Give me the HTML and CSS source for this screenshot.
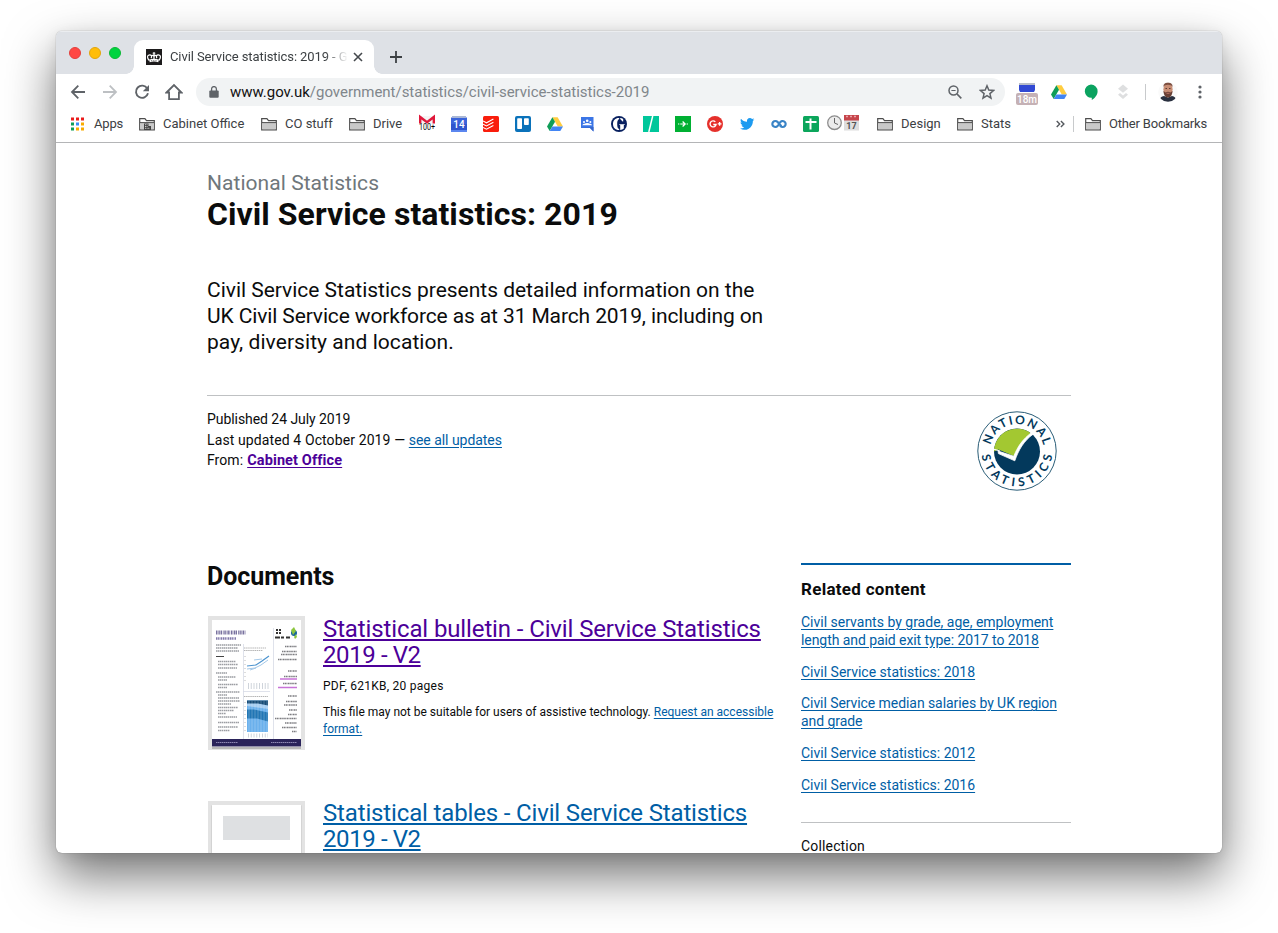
FILE: index.html
```html
<!DOCTYPE html>
<html lang="en">
<head>
<meta charset="utf-8">
<title>Civil Service statistics: 2019</title>
<link rel="stylesheet" href="styles.css">
</head>
<body>
<svg width="0" height="0" class="defs" aria-hidden="true">
  <symbol id="folder" viewBox="0 0 16 16"><path d="M.7 13.8V2.600h5.200l1.600 2h7.800v9.200z" fill="#fff" stroke="#4d4d4d" stroke-width="1.200"/><path d="M1.300 7h13.400v6.200H1.300z" fill="#c9c9c9"/><path d="M1 6.600h14" stroke="#4d4d4d"/></symbol>
  <symbol id="drive" viewBox="0 0 16 16"><path d="M5.400 1.200h5.200L16 10.400h-5.200z" fill="#ffcd40"/><path d="M5.400 1.200 8 5.700 2.700 15 0 10.400z" fill="#0f9d58"/><path d="M5.400 10.400H16L13.300 15H2.700z" fill="#4285f4"/></symbol>
</svg>
<div class="window">
  <div class="tabstrip">
    <div class="lights"><i class="red"></i><i class="amber"></i><i class="green"></i></div>
    <div class="tab">
      <svg width="16" height="16" viewBox="0 0 16 16"><path d="M0 0h16v16H0z" fill="#1d1b1c"/><g fill="none" stroke="#fff"><path d="M8 5v5M3.300 11.500C.8 9 .9 6 3.600 5.800c2-.1 2.300 1.600 1.600 3.400M12.700 11.500c2.500-2.500 2.400-5.500-.3-5.700-2-.1-2.300 1.600-1.600 3.400M5.200 7.500c1.200-1.800 2.400-1.300 2.800.2.400-1.500 1.600-2 2.800-.2" stroke-width="1.200"/><path d="M6.700 4.200h2.600M8 3v2.400" stroke-width="1"/></g><path d="M3.200 10.600c3.100-1 6.500-1 9.600 0l-.5 2.600c-2.900-.8-5.700-.8-8.600 0z" fill="#fff"/><path d="M5 11.700h6" stroke="#1d1b1c" stroke-width=".6" stroke-dasharray="1.200 1"/></svg>
      <span class="tab-title">Civil Service statistics: 2019 - G</span>
      <svg class="x" width="10" height="10" viewBox="0 0 10 10"><path d="m1 1 8 8M9 1 1 9" stroke="#45494d" stroke-width="1.600"/></svg>
    </div>
    <svg class="plus" width="14" height="14" viewBox="0 0 14 14"><path d="M7 1v12M1 7h12" stroke="#3c4043" stroke-width="1.800"/></svg>
  </div>

  <div class="toolbar">
    <div class="nav">
      <svg width="16" height="16" viewBox="0 0 16 16"><path d="M15 8H2.500M8.300 1.700 2 8l6.300 6.300" fill="none" stroke="#5f6368" stroke-width="1.800"/></svg>
      <svg width="16" height="16" viewBox="0 0 16 16"><path d="M1 8h12.500M7.700 1.700 14 8l-6.300 6.300" fill="none" stroke="#bdc0c3" stroke-width="1.800"/></svg>
      <svg width="16" height="16" viewBox="0 0 16 16"><path d="M13.300 4.500A6.100 6.100 0 1 0 14 9.300" fill="none" stroke="#5f6368" stroke-width="1.900"/><path d="M15 1v6.300H8.800z" fill="#5f6368"/></svg>
      <svg width="18" height="18" viewBox="0 0 18 18"><path d="M1.500 9.500 9 2l7.500 7.500h-2.600v6.600H4.100V9.500z" fill="none" stroke="#5f6368" stroke-width="1.800"/></svg>
    </div>
    <div class="omnibox">
      <svg width="10" height="12" viewBox="0 0 10 12"><rect x=".3" y="4.500" width="9.400" height="7.200" rx="1" fill="#5f6368"/><path d="M2.600 5V3a2.400 2.400 0 0 1 4.800 0v2" fill="none" stroke="#5f6368" stroke-width="1.300"/></svg>
      <span class="url"><b>www.gov.uk</b>/government/statistics/civil-service-statistics-2019</span>
      <svg class="mag" width="14" height="14" viewBox="0 0 14 14"><circle cx="5.500" cy="5.500" r="4.500" fill="none" stroke="#5f6368" stroke-width="1.500"/><path d="m9 9 4.300 4.300" stroke="#5f6368" stroke-width="1.700"/><path d="M3.400 5.500h4.200" stroke="#5f6368"/></svg>
      <svg width="16" height="16" viewBox="0 0 16 16"><path d="m8 1.800 1.800 4.300 4.700.4-3.600 3.100 1.100 4.600L8 11.700l-4 2.500 1.100-4.600L1.500 6.500l4.700-.4z" fill="none" stroke="#5f6368" stroke-width="1.500"/></svg>
    </div>
    <div class="exts">
      <span class="ext meet"><svg width="16" height="10" viewBox="0 0 16 10"><path d="M0 0h16v2H0z" fill="#b8bdc8"/><path d="M0 2h16v5l-1 2H1L0 7z" fill="#3149d3"/></svg><em>18m</em></span>
      <span class="ext"><svg width="16" height="16"><use href="#drive"/></svg></span>
      <span class="ext"><svg width="14" height="17" viewBox="0 0 14 17"><path d="M7 .6a6.600 6.600 0 0 1 6.600 6.600c0 3.800-2.800 6.800-5.800 8.900v-2.300A6.600 6.600 0 1 1 7 .6z" fill="#0ba360"/></svg></span>
      <span class="ext"><svg width="12" height="16" viewBox="0 0 12 16"><path d="m6 .5 5 4.200-5 4.100-5-4.100zM1 10.700l2-1.600 3 2.500 3-2.500 2 1.600-5 4.200z" fill="#dedfe0"/></svg></span>
      <i class="bar"></i>
      <svg class="avatar" width="20" height="20" viewBox="0 0 20 20"><clipPath id="av"><circle cx="10" cy="10" r="9.800"/></clipPath><g clip-path="url(#av)"><path d="M0 0h20v20H0z" fill="#fafafa"/><path d="M1 20c.5-4 2.500-5.700 5-6l4 1.500 4-1.500c2.500.3 4 2 5 6z" fill="#29303f"/><ellipse cx="10" cy="7.300" rx="4.600" ry="6" fill="#c88d74"/><path d="M5.400 5C5.200 2 7 .5 10 .5s4.800 1.500 4.600 4.500C13 2 7 2 5.400 5z" fill="#7d4f40"/><path d="M5.400 9c.5 4.800 2.300 6.500 4.600 6.500s4.100-1.700 4.600-6.500l-2.200 1.400c-1.500-.8-3.300-.8-4.800 0z" fill="#6a4035"/><path d="M7.500 6.500h1.500m2 0h1.500" stroke="#5e3a30"/><path d="M8.500 11.300h3" stroke="#b87164"/></g></svg>
      <svg class="dots" width="4" height="14" viewBox="0 0 4 14" fill="#5f6368"><circle cx="2" cy="2" r="1.600"/><circle cx="2" cy="7" r="1.600"/><circle cx="2" cy="12" r="1.600"/></svg>
    </div>
  </div>

  <div class="bookmarks">
    <span class="bm"><svg width="16" height="16" viewBox="0 0 16 16"><path d="M1 1.500h3v3H1zM6 1.500h3v3H6zM11 1.500h3v3h-3z" fill="#ea1b1b"/><path d="M1 6.500h3v3H1z" fill="#0f9d58"/><path d="M6 6.500h3v3H6z" fill="#3b8bf5"/><path d="M11 6.500h3v3h-3z" fill="#f9ab00"/><path d="M1 11.500h3v3H1z" fill="#0f9d58"/><path d="M6 11.500h3v3H6zM11 11.500h3v3h-3z" fill="#f9ab00"/></svg><span class="w29">Apps</span></span>
    <span class="bm"><svg width="16" height="16" viewBox="0 0 16 16"><use href="#folder"/><path d="M5 7.500h4.500V10H12v4H5z" fill="#444"/><path d="M6 8.700h2.500M6 10.500h2.500M6 12.300h5" stroke="#eee" stroke-width=".8" stroke-dasharray="1 .6"/></svg><span class="w82">Cabinet Office</span></span>
    <span class="bm"><svg width="16" height="16"><use href="#folder"/></svg><span class="w48">CO stuff</span></span>
    <span class="bm"><svg width="16" height="16"><use href="#folder"/></svg><span class="w30">Drive</span></span>
    <svg class="gmail" width="16" height="16" viewBox="0 0 16 16"><path d="M0 0h16v8H0z" fill="#f5f5f5"/><path d="M1.200 7.500V1L8 6.200 14.800 1v6.500" fill="none" stroke="#e0173a" stroke-width="2.400"/><text x="0" y="14" class="g100" textLength="16" lengthAdjust="spacingAndGlyphs">100+</text></svg>
    <svg width="16" height="16" viewBox="0 0 16 16"><path d="M0 1.500h16V15q0 1-1 1H1q-1 0-1-1z" fill="#3b64da"/><path d="M0 8h16v6H0z" fill="#2f55cd"/><path d="M1 0h14v2H1z" fill="#a9b7d6"/><path d="M0 14h16v2H0z" fill="#5b86ef"/><text x="8" y="12.300" class="cal14">14</text></svg>
    <svg width="16" height="16" viewBox="0 0 16 16"><rect width="16" height="16" rx="1.500" fill="#f91d0c"/><path d="m0 5 3.500 1.800L10.400 3M0 8.200 3.500 10l6.900-3.800M0 11.400l3.500 1.800L10.400 9.400" fill="none" stroke="#fff" stroke-width="1.100"/></svg>
    <svg width="16" height="16" viewBox="0 0 16 16"><rect width="16" height="16" rx="2" fill="#0a72ba"/><rect x="2.200" y="2.200" width="4.800" height="10.800" rx=".8" fill="#fff"/><rect x="9" y="2.200" width="4.800" height="6.800" rx=".8" fill="#fff"/></svg>
    <svg width="16" height="16"><use href="#drive"/></svg>
    <svg width="16" height="16" viewBox="0 0 16 16"><path d="M2 1h12.500v14.500L11 12H2z" fill="#3a75e6"/><path d="M2 12h9l3.500 3.500V11z" fill="#3565c9"/><g fill="#fff"><circle cx="8.200" cy="4.800" r="1.300"/><circle cx="5" cy="6" r="1"/><circle cx="11.400" cy="6" r="1"/><path d="M3.300 9.300q.6-2 2.200-1.500 1-.8 2.700-.8t2.700.8q1.600-.5 2.200 1.500z"/></g></svg>
    <svg width="16" height="16" viewBox="0 0 16 16"><circle cx="8" cy="8" r="8" fill="#08205f"/><path d="M8.200 2C4.500 1.800 2 4.200 2 8s2.500 6.200 6.200 6v-.9C6.700 12.500 6.200 11 6.200 8s.5-4.500 2-5.100zM9.200 2c1.200.1 2.200.5 3 1.100v2.500h-.6L9.200 3zM8.200 8.200h5.600v.6l-1 .5v3.300c-.9.800-2.200 1.300-3.600 1.400V9.300l-1-.5z" fill="#fff"/></svg>
    <svg width="16" height="16" viewBox="0 0 16 16"><path d="M0 0h16v16H0z" fill="#00c79b"/><path d="M9.700 0 5.800 16" stroke="#fff" stroke-width="1.500"/></svg>
    <svg width="16" height="16" viewBox="0 0 16 16"><path d="M0 0h16v16H0z" fill="#00b033"/><path d="M3 8h1.300M5.300 8h4.300M7.600 5.500 10.200 8l-2.600 2.500M11.600 8H13" fill="none" stroke="#fff" stroke-width="1.200"/></svg>
    <svg width="16" height="16" viewBox="0 0 16 16"><circle cx="8" cy="8" r="8" fill="#e5302b"/><path d="M8.300 5.900A3 3 0 1 0 9 8.500H6.300M10.700 7.900h3.800M12.600 6v3.800" fill="none" stroke="#fff" stroke-width="1.400"/></svg>
    <svg width="16" height="16" viewBox="0 0 24 24"><path d="M23 5.200c-.8.400-1.600.6-2.500.7.900-.5 1.600-1.400 1.900-2.400-.8.500-1.800.9-2.800 1.100A4.400 4.400 0 0 0 12 8.600C8.400 8.400 5.100 6.700 3 4c-1.200 2-.6 4.600 1.300 5.900-.7 0-1.400-.2-2-.5 0 2 1.400 3.900 3.500 4.300-.6.200-1.300.2-2 .1.600 1.700 2.200 3 4.100 3A9 9 0 0 1 1.500 18.600 12.500 12.500 0 0 0 20.800 7.500c.9-.6 1.600-1.400 2.200-2.300z" fill="#1d9bf0"/></svg>
    <svg width="16" height="16" viewBox="0 0 16 16"><path d="M9 6.600a3 3 0 1 1 .4 3.400M7 9.400A3 3 0 1 1 6.600 6L10 9.700" fill="none" stroke="#3a84c6" stroke-width="2.200" stroke-linecap="round"/></svg>
    <svg width="16" height="16" viewBox="0 0 16 16"><rect width="16" height="16" rx="1.500" fill="#0ca65c"/><path d="M2.500 6h11M7.500 2.500v11" stroke="#fff" stroke-width="2"/></svg>
    <svg class="clock" width="33" height="16" viewBox="0 0 33 16"><circle cx="7.500" cy="7.700" r="6.800" fill="#ececec" stroke="#8d8d8d" stroke-width="1.300"/><path d="M7.500 3v5L11 9.500" fill="none" stroke="#666"/><path d="M17 0h15v15.500H17z" fill="#dedede"/><path d="M17 0h15v5.500H17z" fill="#c6454b"/><path d="M19 1.500h2m2 0h2m2 0h2" stroke="#e9a5a8" stroke-width="1.500"/><text x="24.500" y="13.800" class="cal17">17</text></svg>
    <span class="bm"><svg width="16" height="16"><use href="#folder"/></svg><span class="w40">Design</span></span>
    <span class="bm"><svg width="16" height="16"><use href="#folder"/></svg><span>Stats</span></span>
    <svg class="chev" width="9" height="8" viewBox="0 0 9 8"><path d="m.7 1 3 3-3 3M4.900 1l3 3-3 3" fill="none" stroke="#55595e" stroke-width="1.400"/></svg>
    <i class="bar"></i>
    <span class="bm other"><svg width="16" height="16"><use href="#folder"/></svg><span>Other Bookmarks</span></span>
  </div>

  <main class="page">
    <p class="kicker">National Statistics</p>
    <h1>Civil Service statistics: 2019</h1>
    <p class="intro">Civil Service Statistics presents detailed information on the<br><span class="tight">UK Civil Service workforce as at 31 March 2019, including on</span><br><span class="loose">pay, diversity and location.</span></p>
    <div class="meta">
      <div><span class="pub">Published 24 July 2019</span><br><span class="upd">Last updated 4 October 2019 — </span><a class="see">see all updates</a><br>From: <a class="org">Cabinet Office</a></div>
      <svg class="logo" width="80" height="80" viewBox="0 0 80 80">
        <circle cx="40" cy="40" r="39.200" fill="#fff" stroke="#2a5d77" stroke-width="1"/>
        <circle cx="40" cy="40.500" r="23" fill="#03395c"/>
        <path d="M17 40.500a23 23 0 0 1 37-18.100C48 29 42 37 38 45.500L21.500 38.500z" fill="#a3c831"/>
        <path d="m21.100 40 .3 2.600 16.400 7.200C41.500 39 47 29.700 56 23.300l-1.700-1.500C46 28 40.500 35.500 36.800 45.300z" fill="#fff" stroke="#fff" stroke-width=".8"/>
        <path d="m17 38.200 6 1.800" stroke="#fff" stroke-width="1.200"/>
        <path id="top" d="M13 40A27 27 0 0 1 67 40" fill="none"/>
        <path id="bot" d="M4.500 40A35.500 35.500 0 0 0 75.500 40" fill="none"/>
        <text class="seal"><textPath href="#top" startOffset="50%" textLength="73">NATIONAL</textPath></text>
        <text class="seal"><textPath href="#bot" startOffset="50%" textLength="103">STATISTICS</textPath></text>
      </svg>
    </div>
    <div class="cols">
      <section class="docs">
        <h2>Documents</h2>
        <article class="doc">
          <svg class="thumb" width="97" height="134" viewBox="0 0 97 134">
            <path d="M0 0h97v134H0z" fill="#e3e3e3"/><path d="M4 5h89v128H4z" fill="#b7b7b7"/><path d="M4 4h89v127H4z" fill="#fff"/>
            <path d="M8 16.500h30" stroke="#79729f" stroke-width="4" stroke-dasharray="1.300 .5 .8 .6 1 .5 1.500 1.200"/><path d="M8 22.500h20" stroke="#8178aa" stroke-width="2.600" stroke-dasharray="1 .5 1.400 .6"/>
            <path d="M68 13h2v2h-2zm3 0h2v2h-2zm-3 3h2v2h-2zm3 0h2v2h-2z" fill="#333"/><path d="M67 21.500h5m1 0h3m2 0h4" stroke="#333" stroke-width="2"/>
            <circle cx="86" cy="17" r="3" fill="#17659c"/><path d="m83 14 3-3 2 4-3 4zM86 21l2-3 1 3-2 2z" fill="#8cc63f"/>
            <path d="M65.500 12v111M35.500 28v95M35 75.500h27" stroke="#d7dbe6" stroke-width=".8"/>
            <g stroke="#9b9da2" stroke-width="1.400" stroke-dasharray="1 .4 2 .5 1.500 .6"><path d="M8 29h25M8 32h22M8 35h23M10 45.500h18M10 48.500h20M10 52h19M8 57h11M10 61h18M10 64h9M10 68.500h20M10 71.500h9M8 76h24M10 79h9M10 82h21M10 85h22M10 88h13M10 91.500h20M10 94.500h16M10 97.500h8M10 101h19M10 106.500h21M10 111h20M10 114.500h12"/></g>
            <path d="M8 40.500h8" stroke="#444"/>
            <g stroke="#7c7c80" stroke-width="1.500" stroke-dasharray="1 .5 1.500 .4"><path d="M77 30.500h12M74 35.500h15M73 38.500h16M70 43.500h19M80 55h9M76 60.500h13M75 67.500h14M80 80h9M78 85.500h11M76 89h13M81 94h8M80 98.500h9M67 102.500h22M77 107h12M74 111.500h15M84 115.500h5"/></g>
            <path d="M72 63h17M70 71.500h19" stroke="#c873d8" stroke-width="1.300"/>
            <path d="M36 32h22M36 34.500h19M36 80.500h24" stroke="#b5b5b5" stroke-dasharray="1.500 .6"/>
            <path d="m39 50 9-1 6-4 7-5" fill="none" stroke="#4d94cf" stroke-width="1.200"/><path d="m39 53 8-1 6-3 7-5M42 54l6-2M46 44l8-1" fill="none" stroke="#a4c8e8"/>
            <path d="M40 70h22" stroke="#c3cad3" stroke-width="6" stroke-dasharray=".8 2"/>
            <path d="M37 40v28M37 86v30" stroke="#bbb" stroke-dasharray="1 3"/>
            <path d="M39 84.500h21V116H39z" fill="#6ab0ec"/><path d="M39 93.500h7l14 3v9l-11-3H39z" fill="#2176b5"/><path d="M39 87h21v6l-14-2-7-1z" fill="#a5cdf2"/><path d="M39 84.500h21v5l-10-2H39z" fill="#174c77"/>
            <path d="M41 85v31m3-31v31m3-31v31m3-31v31m3-31v31m3-31v31m3-31v31" stroke="#fff" stroke-width=".4" opacity=".6"/><path d="M40 119.500h20" stroke="#c3cad3" stroke-width="4" stroke-dasharray=".8 2"/>
            <path d="M4 123h89v7.500H4z" fill="#2a235a"/><path d="M8 126.500h22M63 126.500h26" stroke="#8d87b3" stroke-dasharray="1.500 .5"/>
          </svg>
          <div>
            <h3><a class="visited">Statistical bulletin - Civil Service Statistics<br><span class="v2">2019 - V2</span></a></h3>
            <p class="info">PDF, 621KB, 20 pages</p>
            <p class="note">This file may not be suitable for users of assistive technology. <a>Request an accessible<br>format.</a></p>
          </div>
        </article>
        <article class="doc">
          <svg class="thumb" width="97" height="134" viewBox="0 0 97 134"><path d="M0 0h97v134H0z" fill="#e3e3e3"/><path d="M3.400 4.500h90.200V134H3.400z" fill="#c9c9c9"/><path d="M4 4h89v130H4z" fill="#fff"/><path d="M15 15h67v24H15z" fill="#dee0e2"/></svg>
          <div><h3><a>Statistical tables - Civil Service Statistics<br><span class="v2">2019 - V2</span></a></h3></div>
        </article>
      </section>
      <aside>
        <h4>Related content</h4>
        <ul>
          <li><a>Civil servants by grade, age, employment<br><span class="median">length and paid exit type: 2017 to 2018</span></a></li>
          <li><a>Civil Service statistics: 2018</a></li>
          <li><a class="median">Civil Service median salaries by UK region<br>and grade</a></li>
          <li><a>Civil Service statistics: 2012</a></li>
          <li><a>Civil Service statistics: 2016</a></li>
        </ul>
        <p class="coll">Collection</p>
      </aside>
    </div>
  </main>
</div>
</body>
</html>
```
FILE: styles.css
```css
*{box-sizing:border-box}
body{margin:0;padding:31px 0 0 56px;height:933px;overflow:hidden;background:#fff;font-family:Roboto,"Liberation Sans",sans-serif;color:#0b0c0c}
svg{display:block;flex:none}
.defs{position:absolute}
h1,h2,h3,h4,p,ul{margin:0;padding:0}
.window{width:1166px;height:822px;border-radius:6px;overflow:hidden;background:#fff;box-shadow:0 0 1px rgba(0,0,0,.5),0 3px 14px rgba(0,0,0,.08),0 23px 50px rgba(0,0,0,.55)}

.tabstrip{height:43px;background:#dee1e6;display:flex;box-shadow:inset 0 1px #ebedf0}
.lights{display:flex;gap:8px;padding:16px 11px 0 13px;width:78px}
.lights i{width:12px;height:12px;border-radius:50%;flex:none}
.red{background:#ff4743;border:1px solid #e33f3c}
.amber{background:#ffbd08;border:1px solid #e2a50c}
.green{background:#00d43f;border:1px solid #0bb836}
.tab{position:relative;width:240px;margin-top:9px;height:34px;background:#fff;border-radius:9px 9px 0 0;display:flex;align-items:center;padding:0 11px 0 12px}
.tab:before,.tab:after{content:"";position:absolute;bottom:0;width:8px;height:8px}
.tab:before{left:-8px;background:radial-gradient(circle at 0 0,transparent 7.500px,#fff 8px)}
.tab:after{right:-8px;background:radial-gradient(circle at 100% 0,transparent 7.500px,#fff 8px)}
.tab-title{margin:-2px 0 0 8px;width:180px;white-space:nowrap;font-size:13px;letter-spacing:-.09px;color:#3c4043;-webkit-mask-image:linear-gradient(90deg,#000 155px,transparent 178px);mask-image:linear-gradient(90deg,#000 155px,transparent 178px)}
.tab .x{margin-left:3px}
.plus{margin:19px 0 0 15px}

.toolbar{height:36px;display:flex;align-items:center;padding-left:6px}
.nav{display:grid;grid-template-columns:repeat(4,32px);justify-items:center;align-items:center;margin-right:6px}
.omnibox{width:809px;height:28px;border-radius:14px;background:#f1f3f4;display:flex;align-items:center;padding:0 10px 0 13px}
.omnibox svg:first-child{margin-right:11px}
.url{font-size:15px;letter-spacing:-.02px;color:#80868b;white-space:nowrap}
.url b{font-weight:400;color:#111}
.omnibox .mag{margin:0 17px 0 auto}
.exts{display:flex;align-items:center;padding-left:6px}
.ext{width:32px;display:flex;justify-content:center}
.meet{flex-direction:column;align-items:center;height:22px}
.meet em{display:block;width:22px;height:12px;border-radius:2px;background:#c5b1b5;color:#fff;font:500 10px/13px Roboto,sans-serif;text-align:center}
.ext.meet{margin-top:4px}
.bar{display:block;width:1px;height:16px;background:#c8cacc}
.exts .bar{margin:0 12px 0 6px}
.dots{margin-left:20px}

.bookmarks{height:33px;border-bottom:1px solid #b4b5b7;display:flex;gap:16px;padding:0 15px 4px 14px;align-items:center;font-size:13px;color:#3c4043}
.bm{display:flex;gap:8px;align-items:center;white-space:nowrap}
.bm>span{margin-top:-2px}
.w29{width:29px;letter-spacing:-.2px}.w82{width:82px}.w48{width:48px}.w30{width:30px}.w40{width:40px}
.clock{margin:-2px 1px 0 -8px}
.chev{margin-left:auto}
.bookmarks .bar{margin-left:-8px}
.other{margin-left:-5px;letter-spacing:-.17px}
.gmail{overflow:visible}
.g100{font:8.500px Roboto,sans-serif;fill:#000}
.cal14{font:500 10px Roboto,sans-serif;fill:#fff;text-anchor:middle}
.cal17{font:700 9px Roboto,sans-serif;fill:#555;text-anchor:middle}

.page{padding:27px 151px 0}
.kicker{font-size:21px;line-height:26px;color:#6f777b;letter-spacing:.05px}
h1{font-size:32px;line-height:36px;letter-spacing:.06px}
.intro{margin-top:45px;font-size:21px;line-height:26px;white-space:nowrap;letter-spacing:-.02px}
.tight{letter-spacing:-.12px}
.loose{letter-spacing:.06px}
.meta{margin-top:40px;border-top:1px solid #bfc1c3;padding:13px 14.500px 0 0;display:flex;justify-content:space-between;font-size:14px;line-height:20.500px;letter-spacing:.06px}
.pub{letter-spacing:-.06px}
.upd{letter-spacing:.11px}
.see{letter-spacing:-.04px}
.logo{margin-top:2px}
.seal{font:700 12px Lato,sans-serif;fill:#03395c;text-anchor:middle}
a{color:#005ea5;text-decoration:underline;text-underline-offset:1.500px}
.org,.visited{color:#4c0099}
.org{font-weight:700;font-size:14.500px;letter-spacing:.12px;margin-left:.5px}
.cols{display:flex;justify-content:space-between;margin-top:72px}
.docs{width:568px}
h2{font-size:25px;line-height:28px;letter-spacing:-.05px}
.doc{display:flex;gap:18px;height:185px;margin-left:1px}
h2+.doc{margin-top:25px}
h3{font-size:24px;font-weight:400;line-height:26px;letter-spacing:-.12px;white-space:nowrap}
h3 a{text-decoration-thickness:2px;text-underline-offset:2px}
.v2{letter-spacing:-.4px}
.doc+.doc h3{margin-top:-1px;letter-spacing:-.15px}
.doc>div{font-size:12px;line-height:17px;white-space:nowrap}
.info{margin-top:10px;letter-spacing:.25px}
.note{margin-top:9px}
aside{width:270px;border-top:2px solid #005ea5;font-size:14px;line-height:18px;white-space:nowrap}
h4{font-size:17px;line-height:20px;margin:14px 0 14px;letter-spacing:.28px}
ul{list-style:none;display:grid;gap:13.700px}
.median{letter-spacing:-.07px}
.coll{margin-top:28px;border-top:1px solid #bfc1c3;padding-top:14px;letter-spacing:.16px}
```
